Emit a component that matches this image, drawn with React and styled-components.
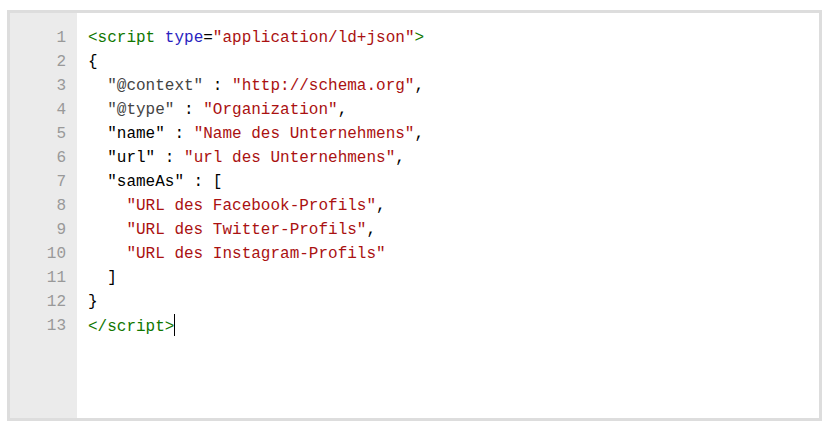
import styled, { createGlobalStyle } from "styled-components";

const GlobalStyle = createGlobalStyle`
  body {
    margin: 0;
    background: #fff;
  }
`;

const Editor = styled.div`
  box-sizing: border-box;
  margin: 10px 0 0 7px;
  width: 815px;
  height: 411px;
  border: 3px solid #dddddd;
  display: flex;
  background: #fff;
  font-family: "Liberation Mono", "DejaVu Sans Mono", monospace;
  font-size: 16px;
  line-height: 24px;
`;

const Gutter = styled.div`
  width: 67px;
  background: #ebebeb;
  padding: 13px 11px 0 0;
  box-sizing: border-box;
  text-align: right;
  color: #999;
`;

const Code = styled.div`
  flex: 1;
  padding: 13px 0 0 11px;
  white-space: pre;
  color: #000;
`;

const Line = styled.div`
  height: 24px;
`;

const Tag = styled.span`
  color: #117700;
`;

const Attr = styled.span`
  color: #2a1fc0;
`;

const Str = styled.span`
  color: #aa1111;
`;

const Key = styled.span`
  color: ${(p) => (p.$dim ? "#444" : "#000")};
`;

const Cursor = styled.span`
  display: inline-block;
  width: 1px;
  height: 22px;
  background: #000;
  vertical-align: -5px;
`;

const lines = [
  <>
    <Tag>&lt;script</Tag> <Attr>type</Attr>=<Str>"application/ld+json"</Str>
    <Tag>&gt;</Tag>
  </>,
  <>{"{"}</>,
  <>
    {"  "}
    <Key $dim>"@context"</Key> : <Str>"http://schema.org"</Str>,
  </>,
  <>
    {"  "}
    <Key $dim>"@type"</Key> : <Str>"Organization"</Str>,
  </>,
  <>
    {"  "}
    <Key>"name"</Key> : <Str>"Name des Unternehmens"</Str>,
  </>,
  <>
    {"  "}
    <Key>"url"</Key> : <Str>"url des Unternehmens"</Str>,
  </>,
  <>
    {"  "}
    <Key>"sameAs"</Key> : [
  </>,
  <>
    {"    "}
    <Str>"URL des Facebook-Profils"</Str>,
  </>,
  <>
    {"    "}
    <Str>"URL des Twitter-Profils"</Str>,
  </>,
  <>
    {"    "}
    <Str>"URL des Instagram-Profils"</Str>
  </>,
  <>{"  ]"}</>,
  <>{"}"}</>,
  <>
    <Tag>&lt;/script&gt;</Tag>
    <Cursor />
  </>,
];

export default function App() {
  return (
    <>
      <GlobalStyle />
      <Editor>
        <Gutter>
          {lines.map((_, i) => (
            <Line key={i}>{i + 1}</Line>
          ))}
        </Gutter>
        <Code>
          {lines.map((l, i) => (
            <Line key={i}>{l}</Line>
          ))}
        </Code>
      </Editor>
    </>
  );
}
